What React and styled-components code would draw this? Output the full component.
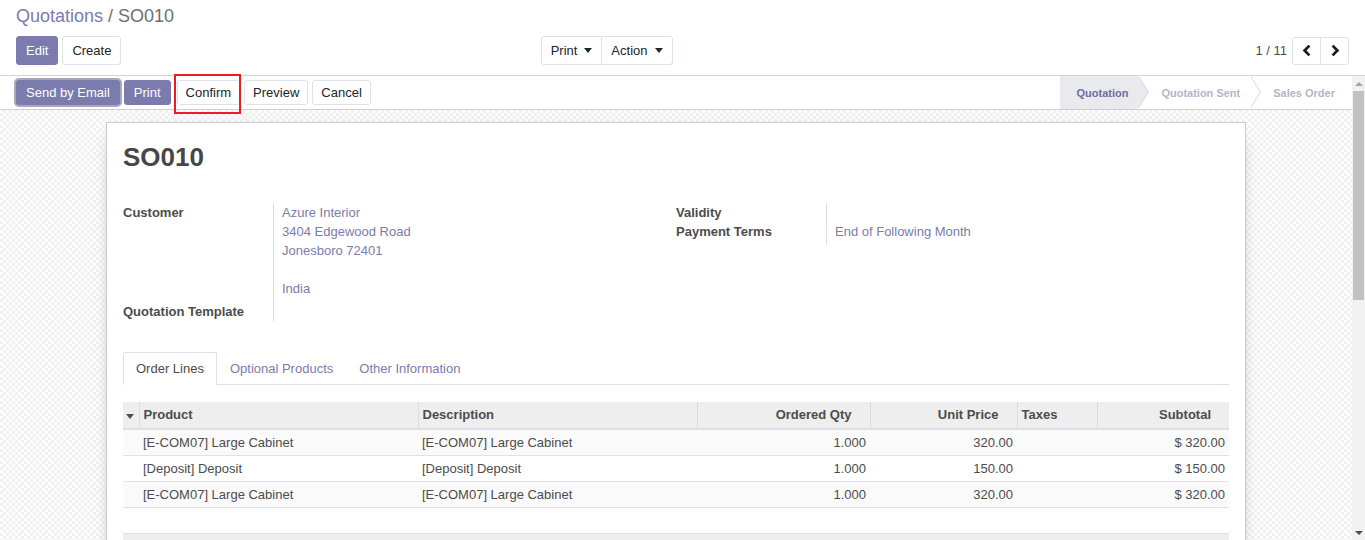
import React from "react";
import styled, { createGlobalStyle, css } from "styled-components";

const PURPLE = "#7C7BAD";

const GlobalStyle = createGlobalStyle`
  html, body {
    margin: 0;
    height: 100%;
    overflow: hidden;
  }
  body {
    font-family: "Liberation Sans", Arial, sans-serif;
    font-size: 13px;
    color: #4c4c4c;
    background: #fff;
  }
  #root {
    height: 100%;
  }
  * {
    box-sizing: border-box;
  }
`;

const Page = styled.div`
  position: relative;
  height: 100vh;
  display: flex;
  flex-direction: column;
`;

const ControlPanel = styled.div`
  flex: none;
  display: grid;
  grid-template-columns: 1fr 1fr;
  padding: 5px 16px 10px;
  border-bottom: 1px solid #d4d4d4;
  background: #fff;
`;

const Breadcrumb = styled.div`
  grid-column: 1 / 3;
  font-size: 18px;
  line-height: 22px;
  color: #6f6f6f;
  margin-bottom: 9px;
`;

const Crumb = styled.a`
  color: ${PURPLE};
  text-decoration: none;
`;

const LeftBar = styled.div`
  display: flex;
  justify-content: space-between;
  padding-right: 10px;
`;

const RightBar = styled.div`
  display: flex;
  justify-content: flex-end;
  align-items: center;
`;

const Buttons = styled.div`
  display: flex;
  gap: 4px;
  align-items: center;
`;

const Btn = styled.button`
  font-family: inherit;
  font-size: 13px;
  line-height: 19px;
  padding: ${(p) => (p.$small ? `2px ${p.$primary ? 9 : 8}px` : "4px 9px")};
  border-radius: 3px;
  border: 1px solid ${(p) => (p.$primary ? PURPLE : "#dee2e6")};
  background: ${(p) => (p.$primary ? PURPLE : "#fff")};
  color: ${(p) => (p.$primary ? "#fff" : "#212529")};
  white-space: nowrap;
  display: inline-flex;
  align-items: center;
  cursor: pointer;
  ${(p) =>
    p.$focus &&
    css`
      box-shadow: 0 0 0 2px rgba(96, 95, 140, 0.55);
    `}
`;

const Group = styled.div`
  display: flex;

  & > ${Btn} {
    border-radius: 0;
  }
  & > ${Btn}:first-child {
    border-radius: 3px 0 0 3px;
  }
  & > ${Btn}:last-child {
    border-radius: 0 3px 3px 0;
  }
  & > ${Btn} + ${Btn} {
    margin-left: -1px;
  }
`;

const Caret = styled.span`
  display: inline-block;
  margin-left: ${(p) => p.$gap ?? 7}px;
  border-top: 5px solid currentColor;
  border-left: 4.5px solid transparent;
  border-right: 4.5px solid transparent;
`;

const PagerValue = styled.span`
  color: #4c4c4c;
  margin-right: 5px;
`;

const PagerBtn = styled(Btn)`
  height: 28px;
  width: 29px;
  justify-content: center;
  padding: 0;
  color: #1d1d1d;
`;

const Body = styled.div`
  flex: 1;
  min-height: 0;
  display: flex;
`;

const Scroller = styled.div`
  flex: 1;
  min-width: 0;
  overflow: hidden;
`;

const ScrollRail = styled.div`
  flex: none;
  width: 13px;
  display: flex;
  flex-direction: column;
  background: #f1f1f1;
`;

const RailArrow = styled.div`
  flex: none;
  height: 15px;
  display: flex;
  align-items: center;
  justify-content: center;

  &::before {
    content: "";
    border-left: 4px solid transparent;
    border-right: 4px solid transparent;
    ${(p) =>
      p.$down
        ? css`
            border-top: 4px solid #505050;
          `
        : css`
            border-bottom: 4px solid #a3a3a3;
          `}
  }
`;

const RailTrack = styled.div`
  flex: 1;
`;

const Thumb = styled.div`
  height: 209px;
  margin: 0 1px;
  background: #c1c1c1;
`;

const StatusBar = styled.div`
  display: flex;
  justify-content: space-between;
  align-items: stretch;
  height: 34px;
  padding-left: 16px;
  border-bottom: 1px solid #cfcfcf;
  background: #fff;
`;

const Steps = styled.div`
  display: flex;
`;

const Step = styled.div`
  position: relative;
  display: flex;
  align-items: center;
  font-size: 11px;
  font-weight: bold;
  padding: 0 ${(p) => (p.$last ? 17 : 10)}px 0 ${(p) => (p.$first ? 16 : 23)}px;
  color: ${(p) => (p.$active ? "#6e6c9f" : "#b3b5c6")};
  background: ${(p) => (p.$active ? "#e9eaee" : "#fff")};

  ${(p) =>
    !p.$last &&
    css`
      &::before,
      &::after {
        content: "";
        position: absolute;
        top: 0;
        left: 100%;
        border-top: 16.5px solid transparent;
        border-bottom: 16.5px solid transparent;
        z-index: 1;
      }
      &::before {
        margin-left: 1px;
        border-left: 10px solid #d8d8d8;
      }
      &::after {
        border-left: 10px solid ${p.$active ? "#e9eaee" : "#fff"};
      }
    `}
`;

const FormBg = styled.div`
  background-color: #fbfbfb;
  background-image: repeating-conic-gradient(#f1f1f1 0% 25%, #fcfcfc 0% 50%);
  background-size: 6px 6px;
  padding: 12px 0 48px;
`;

const Sheet = styled.div`
  max-width: 1140px;
  min-height: 860px;
  margin: 0 auto;
  background: #fff;
  border: 1px solid #c9c9d7;
  box-shadow: 0 5px 20px -15px #000;
  padding: 19px 16px 24px;
`;

const Title = styled.h1`
  margin: 0 0 30px;
  font-size: 26px;
  line-height: 31px;
  font-weight: bold;
  color: #474747;
`;

const Columns = styled.div`
  display: grid;
  grid-template-columns: 1fr 1fr;
  align-items: start;
`;

const FieldGroup = styled.div`
  display: grid;
  grid-template-columns: 150px 1fr;
  line-height: 19px;
`;

const Label = styled.div`
  font-weight: bold;
  color: #4c4c4c;
`;

const Value = styled.div`
  border-left: 1px solid #dcdcdc;
  padding-left: 8px;
  padding-bottom: ${(p) => p.$pad || 0}px;
  min-height: 19px;
  color: ${PURPLE};
`;

const Tabs = styled.div`
  display: flex;
  margin-top: 31px;
  border-bottom: 1px solid #dee2e6;
`;

const Tab = styled.a`
  padding: 6px 12px;
  line-height: 19px;
  margin-bottom: -1px;
  border: 1px solid transparent;
  border-radius: 2px 2px 0 0;
  color: ${PURPLE};
  text-decoration: none;

  ${(p) =>
    p.$active &&
    css`
      color: #4c4c4c;
      background: #fff;
      border-color: #dee2e6 #dee2e6 #fff;
    `}
`;

const Table = styled.table`
  width: 100%;
  margin-top: 17px;
  border-collapse: collapse;
  table-layout: fixed;
  line-height: 19px;
`;

const Th = styled.th`
  background: #eee;
  padding: 3px ${(p) => (p.$num ? 18 : 4)}px 4px 4px;
  text-align: ${(p) => (p.$num ? "right" : "left")};
  font-weight: bold;
  color: #4c4c4c;
  border-bottom: 2px solid #dee2e6;
  border-left: 1px solid #dcdcdc;
  white-space: nowrap;

  &:first-child {
    border-left: none;
    padding: 3px 0 4px 3px;
  }
`;

const Row = styled.tr`
  background: ${(p) => (p.$odd ? "#fafafa" : "#fff")};
`;

const Td = styled.td`
  padding: 3px 4px;
  height: 26px;
  border-top: 1px solid #dee2e6;
  text-align: ${(p) => (p.$num ? "right" : "left")};
  color: #4c4c4c;
  white-space: nowrap;
`;

const FootCell = styled.td`
  background: #eee;
  height: 26px;
  border-top: 1px solid #dee2e6;
`;

const Annotation = styled.div`
  position: absolute;
  left: 174px;
  top: 74px;
  width: 67px;
  height: 40px;
  border: 2px solid #ea1c24;
  pointer-events: none;
`;

function Chevron({ dir }) {
  const points = dir === "left" ? "9,2 3,8 9,14" : "3,2 9,8 3,14";
  return (
    <svg width="10" height="13" viewBox="0 0 12 16">
      <polyline
        points={points}
        fill="none"
        stroke="currentColor"
        strokeWidth="3.4"
        strokeLinecap="butt"
        strokeLinejoin="miter"
      />
    </svg>
  );
}

const lines = [
  {
    product: "[E-COM07] Large Cabinet",
    desc: "[E-COM07] Large Cabinet",
    qty: "1.000",
    price: "320.00",
    subtotal: "$ 320.00",
  },
  {
    product: "[Deposit] Deposit",
    desc: "[Deposit] Deposit",
    qty: "1.000",
    price: "150.00",
    subtotal: "$ 150.00",
  },
  {
    product: "[E-COM07] Large Cabinet",
    desc: "[E-COM07] Large Cabinet",
    qty: "1.000",
    price: "320.00",
    subtotal: "$ 320.00",
  },
];

export default function App() {
  return (
    <Page>
      <GlobalStyle />
      <ControlPanel>
        <Breadcrumb>
          <Crumb href="#">Quotations</Crumb> / SO010
        </Breadcrumb>
        <LeftBar>
          <Buttons>
            <Btn $primary>Edit</Btn>
            <Btn>Create</Btn>
          </Buttons>
          <Group>
            <Btn>
              Print
              <Caret />
            </Btn>
            <Btn>
              Action
              <Caret />
            </Btn>
          </Group>
        </LeftBar>
        <RightBar>
          <PagerValue>1 / 11</PagerValue>
          <Group>
            <PagerBtn>
              <Chevron dir="left" />
            </PagerBtn>
            <PagerBtn>
              <Chevron dir="right" />
            </PagerBtn>
          </Group>
        </RightBar>
      </ControlPanel>

      <Body>
        <Scroller>
          <StatusBar>
            <Buttons>
              <Btn $small $primary $focus>
                Send by Email
              </Btn>
              <Btn $small $primary>
                Print
              </Btn>
              <Btn $small style={{ marginLeft: 2 }}>
                Confirm
              </Btn>
              <Btn $small>Preview</Btn>
              <Btn $small>Cancel</Btn>
            </Buttons>
            <Steps>
              <Step $first $active>
                Quotation
              </Step>
              <Step>Quotation Sent</Step>
              <Step $last>Sales Order</Step>
            </Steps>
          </StatusBar>

          <FormBg>
            <Sheet>
              <Title>SO010</Title>
              <Columns>
                <FieldGroup>
                  <Label>Customer</Label>
                  <Value $pad={4}>
                    Azure Interior
                    <br />
                    3404 Edgewood Road
                    <br />
                    Jonesboro 72401
                    <br />
                    <br />
                    India
                  </Value>
                  <Label>Quotation Template</Label>
                  <Value />
                </FieldGroup>
                <FieldGroup>
                  <Label>Validity</Label>
                  <Value />
                  <Label>Payment Terms</Label>
                  <Value $pad={4}>End of Following Month</Value>
                </FieldGroup>
              </Columns>

              <Tabs>
                <Tab $active>Order Lines</Tab>
                <Tab>Optional Products</Tab>
                <Tab>Other Information</Tab>
              </Tabs>

              <Table>
                <colgroup>
                  <col style={{ width: 16 }} />
                  <col style={{ width: 279 }} />
                  <col style={{ width: 279 }} />
                  <col style={{ width: 173 }} />
                  <col style={{ width: 147 }} />
                  <col style={{ width: 80 }} />
                  <col style={{ width: 132 }} />
                </colgroup>
                <thead>
                  <tr>
                    <Th>
                      <Caret $gap={0} />
                    </Th>
                    <Th>Product</Th>
                    <Th>Description</Th>
                    <Th $num>Ordered Qty</Th>
                    <Th $num>Unit Price</Th>
                    <Th>Taxes</Th>
                    <Th $num>Subtotal</Th>
                  </tr>
                </thead>
                <tbody>
                  {lines.map((line, index) => (
                    <Row key={index} $odd={index % 2 === 0}>
                      <Td />
                      <Td>{line.product}</Td>
                      <Td>{line.desc}</Td>
                      <Td $num>{line.qty}</Td>
                      <Td $num>{line.price}</Td>
                      <Td />
                      <Td $num>{line.subtotal}</Td>
                    </Row>
                  ))}
                  <Row>
                    <Td colSpan={7} />
                  </Row>
                </tbody>
                <tfoot>
                  <tr>
                    <FootCell colSpan={7} />
                  </tr>
                </tfoot>
              </Table>
            </Sheet>
          </FormBg>
        </Scroller>

        <ScrollRail>
          <RailArrow />
          <RailTrack>
            <Thumb />
          </RailTrack>
          <RailArrow $down />
        </ScrollRail>
      </Body>

      <Annotation />
    </Page>
  );
}
